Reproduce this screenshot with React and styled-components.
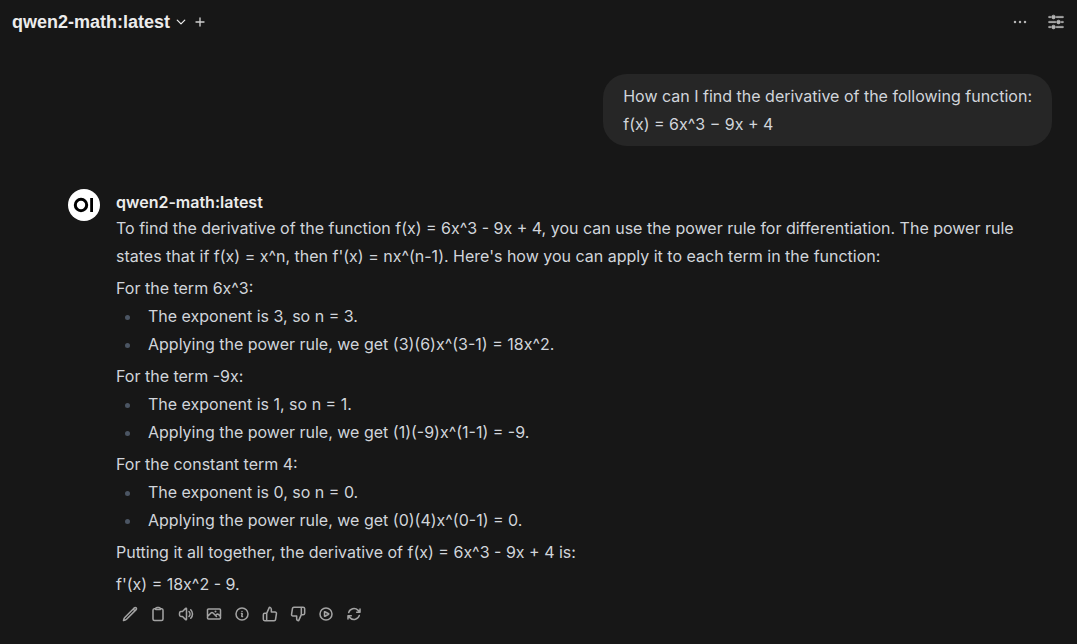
import React from "react";
import styled, { createGlobalStyle } from "styled-components";
import {
  HiAdjustmentsHorizontal,
  HiOutlineArrowPath,
  HiOutlineChevronDown,
  HiOutlineClipboard,
  HiOutlineEllipsisHorizontal,
  HiOutlineInformationCircle,
  HiOutlinePencil,
  HiOutlinePhoto,
  HiOutlinePlayCircle,
  HiOutlineSpeakerWave,
} from "react-icons/hi2";
import { FiThumbsDown, FiThumbsUp } from "react-icons/fi";

const GlobalStyle = createGlobalStyle`
  *, *::before, *::after { box-sizing: border-box; }
  body {
    margin: 0;
    background: #171717;
    color: #d1d5db;
    font-family: Inter, "Liberation Sans", sans-serif;
    font-size: 16px;
    line-height: 28px;
  }
`;

const Page = styled.div`
  min-height: 100vh;
  display: flex;
  flex-direction: column;
`;

const Header = styled.header`
  display: flex;
  align-items: center;
  justify-content: space-between;
  height: 44px;
  padding: 0 11px 0 12px;
`;

const HeaderGroup = styled.div`
  display: flex;
  align-items: center;
  gap: ${({ $gap }) => $gap}px;
`;

const IconButton = styled.button`
  display: inline-flex;
  align-items: center;
  justify-content: center;
  padding: ${({ $pad = 0 }) => $pad}px;
  border: 0;
  background: none;
  color: ${({ $color = "#a3a3a3" }) => $color};
  cursor: pointer;

  svg {
    display: block;
    width: ${({ $size = 16 }) => $size}px;
    height: ${({ $size = 16 }) => $size}px;
    stroke-width: ${({ $stroke = 2.3 }) => $stroke};
  }
`;

const ModelButton = styled(IconButton)`
  gap: 5px;
  font: bold 18px/28px "Liberation Sans", Arial, sans-serif;
`;

const Chat = styled.main`
  display: flex;
  flex-direction: column;
  gap: 43px;
  padding: 30px 25px 16px 68px;
`;

const UserBubble = styled.section`
  align-self: flex-end;
  max-width: 90%;
  padding: 8px 20px;
  border-radius: 24px;
  background: #262626;
`;

const Response = styled.article`
  display: flex;
  align-items: flex-start;
  gap: 16px;
`;

const Avatar = styled.svg`
  flex: none;
  width: 32px;
  height: 32px;
`;

const ResponseBody = styled.div`
  flex: 1;
  min-width: 0;
  padding-top: 1px;
`;

const ModelName = styled.h2`
  margin: 0;
  color: #ececec;
  font-size: 16px;
  font-weight: 600;
  line-height: 24px;
`;

const Prose = styled.div`
  p { margin: 0; }
  p + p, ul + p { margin-top: 4px; }
`;

const Steps = styled.ul`
  margin: 0;
  padding-left: 26px;
  list-style: disc;

  li { padding-left: 6px; }
  li::marker { color: #4b5563; }
`;

const Actions = styled.div`
  display: flex;
  margin-top: 2px;
`;

const terms = [
  {
    title: "For the term 6x^3:",
    steps: [
      "The exponent is 3, so n = 3.",
      "Applying the power rule, we get (3)(6)x^(3-1) = 18x^2.",
    ],
  },
  {
    title: "For the term -9x:",
    steps: [
      "The exponent is 1, so n = 1.",
      "Applying the power rule, we get (1)(-9)x^(1-1) = -9.",
    ],
  },
  {
    title: "For the constant term 4:",
    steps: [
      "The exponent is 0, so n = 0.",
      "Applying the power rule, we get (0)(4)x^(0-1) = 0.",
    ],
  },
];

const actions = [
  ["Edit", HiOutlinePencil],
  ["Copy", HiOutlineClipboard],
  ["Read aloud", HiOutlineSpeakerWave],
  ["Generate image", HiOutlinePhoto],
  ["Generation info", HiOutlineInformationCircle],
  ["Good response", FiThumbsUp],
  ["Bad response", FiThumbsDown],
  ["Continue response", HiOutlinePlayCircle],
  ["Regenerate", HiOutlineArrowPath],
];

export default function App() {
  return (
    <Page>
      <GlobalStyle />
      <Header>
        <HeaderGroup $gap={5}>
          <ModelButton type="button" $color="#ececec" $size={12} $stroke={2.5}>
            qwen2-math:latest
            <HiOutlineChevronDown aria-hidden="true" />
          </ModelButton>
          <IconButton type="button" aria-label="Add model" $color="#d0d0d0" $stroke={2}>
            <svg viewBox="0 0 24 24" fill="none" stroke="currentColor" strokeLinecap="round">
              <path d="M12 6v12m6-6H6" />
            </svg>
          </IconButton>
        </HeaderGroup>
        <HeaderGroup $gap={16}>
          <IconButton type="button" aria-label="More" $color="#b4b4b4" $size={20} $stroke={1.5}>
            <HiOutlineEllipsisHorizontal />
          </IconButton>
          <IconButton type="button" aria-label="Controls" $color="#b4b4b4" $size={20} $stroke={0.8}>
            <HiAdjustmentsHorizontal />
          </IconButton>
        </HeaderGroup>
      </Header>
      <Chat>
        <UserBubble>
          How can I find the derivative of the following function:
          <br />
          f(x) = 6x^3 − 9x + 4
        </UserBubble>
        <Response>
          <Avatar viewBox="0 0 32 32" aria-hidden="true">
            <circle cx="16" cy="16" r="16" fill="#fff" />
            <circle cx="13" cy="16" r="5.7" fill="none" stroke="#000" strokeWidth="3" />
            <rect x="22.2" y="9" width="2.8" height="14" fill="#000" />
          </Avatar>
          <ResponseBody>
            <ModelName>qwen2-math:latest</ModelName>
            <Prose>
              <p>
                To find the derivative of the function f(x) = 6x^3 - 9x + 4, you can use the power
                rule for differentiation. The power rule states that if f(x) = x^n, then f'(x) =
                nx^(n-1). Here's how you can apply it to each term in the function:
              </p>
              {terms.map(({ title, steps }) => (
                <React.Fragment key={title}>
                  <p>{title}</p>
                  <Steps>
                    {steps.map((step) => (
                      <li key={step}>{step}</li>
                    ))}
                  </Steps>
                </React.Fragment>
              ))}
              <p>Putting it all together, the derivative of f(x) = 6x^3 - 9x + 4 is:</p>
              <p>f'(x) = 18x^2 - 9.</p>
            </Prose>
            <Actions>
              {actions.map(([label, Icon]) => (
                <IconButton key={label} type="button" aria-label={label} $pad={6}>
                  <Icon />
                </IconButton>
              ))}
            </Actions>
          </ResponseBody>
        </Response>
      </Chat>
    </Page>
  );
}
